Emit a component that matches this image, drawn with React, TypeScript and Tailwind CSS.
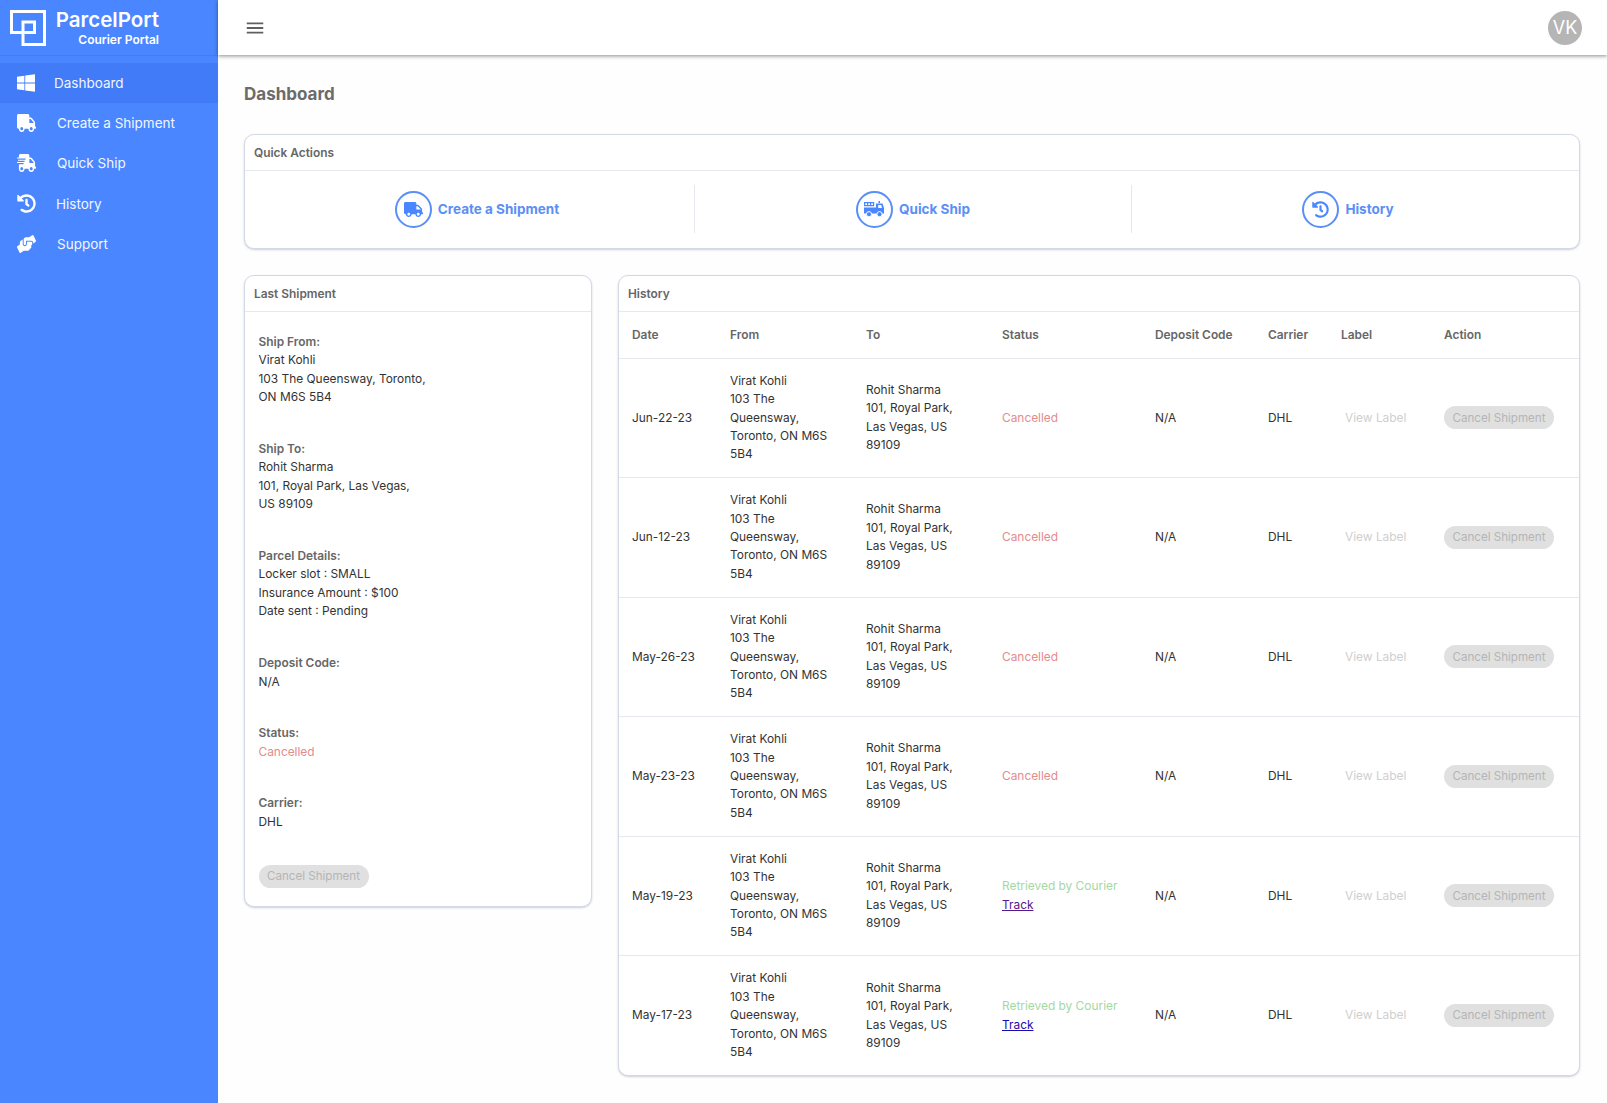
import React from "react";
import { FaWindows, FaTruck, FaShippingFast, FaHistory, FaHandsHelping } from "react-icons/fa";
import { MdOutlineMenu } from "react-icons/md";

const navItems = [
    { label: "Dashboard", icon: FaWindows, active: true, labelClass: "ml-[19px]", iconClass: "h-[20px] w-[18px]" },
    { label: "Create a Shipment", icon: FaTruck, active: false, labelClass: "ml-[21px]", iconClass: "h-[18px] w-[19px]" },
    { label: "Quick Ship", icon: FaShippingFast, active: false, labelClass: "ml-[21px]", iconClass: "h-[18px] w-[19px]" },
    { label: "History", icon: FaHistory, active: false, labelClass: "ml-[20px]", iconClass: "h-[19px] w-[19px]" },
    { label: "Support", icon: FaHandsHelping, active: false, labelClass: "ml-[21px]", iconClass: "h-[18px] w-[19px]" },
];

const shipments = [
    { date: "Jun-22-23", status: "Cancelled" },
    { date: "Jun-12-23", status: "Cancelled" },
    { date: "May-26-23", status: "Cancelled" },
    { date: "May-23-23", status: "Cancelled" },
    { date: "May-19-23", status: "Retrieved", visited: true },
    { date: "May-17-23", status: "Retrieved" },
];

const headers = ["Date", "From", "To", "Status", "Deposit Code", "Carrier", "Label", "Action"];

const Logo = (): React.JSX.Element => (
    <svg width="36" height="36" viewBox="0 0 36 36" fill="none" stroke="white" strokeWidth="3">
        <path d="M1.5 1.5H34.5V34.5H13V12H24.5V22.5H1.5Z" />
    </svg>
);

// fire-truck style glyph used on the Quick Ship action
const QuickShipIcon = (): React.JSX.Element => (
    <svg width="21" height="16" viewBox="0 0 21 16" fill="currentColor">
        <path d="M0 1H10V2.2H0ZM0 4H10V5.2H0ZM0 1H1.2V5H0ZM3 1H4.2V5H3ZM6 1H7.2V5H6ZM9 1H10.2V5H9Z" />
        <path d="M14.5 0H16V2H14.5Z" />
        <path fillRule="evenodd" d="M12 2.5H18.5L20 7V12.5H0V6.5H12ZM14.2 4V7H18L17.2 4Z" />
        <circle cx="5" cy="13.2" r="2.6" stroke="white" strokeWidth="1" />
        <circle cx="15.5" cy="13.2" r="2.6" stroke="white" strokeWidth="1" />
    </svg>
);

const TruckIcon = (): React.JSX.Element => <FaTruck className="text-[19px]" />;
const HistoryIcon = (): React.JSX.Element => <FaHistory className="text-[17px]" />;

const CancelButton = (): React.JSX.Element => (
    <button disabled className="h-[23px] w-[110px] rounded-full bg-[#e0e0e0] text-[11.6px] text-[#b5b5b5]">
        Cancel Shipment
    </button>
);

const Sidebar = (): React.JSX.Element => (
    <aside className="w-[218px] shrink-0 bg-[#4a86ff] text-[#f2f6ff]">
        <div className="flex h-[56px] items-center border-b border-[#437df2] pl-[10px]">
            <Logo />
            <div className="mb-[2px] ml-[9px] flex w-[104px] flex-col items-end font-semibold text-white">
                <span className="text-[20.5px] leading-[25px]">ParcelPort</span>
                <span className="text-[12px] leading-[15px]">Courier Portal</span>
            </div>
        </div>
        <nav className="mt-[7px]">
            {navItems.map((item) => (
                <div
                    key={item.label}
                    className={`flex h-[40.2px] items-center pl-[17px] text-[13.5px] ${item.active ? "bg-[#417bf7]" : ""}`}
                >
                    <item.icon className={`shrink-0 text-white ${item.iconClass}`} preserveAspectRatio="none" />
                    <span className={item.labelClass}>{item.label}</span>
                </div>
            ))}
        </nav>
    </aside>
);

const Card = ({ title, className, children }: { title: string; className?: string; children: React.ReactNode }): React.JSX.Element => (
    <section className={`rounded-[10px] border border-[#d4d9e6] bg-white shadow-[0_1px_2px_rgba(90,100,140,0.3)] ${className ?? ""}`}>
        <h2 className="flex h-[36px] items-center border-b border-[#e6e8ee] pl-[9px] pt-[1px] text-[11.9px] font-semibold text-[#666]">
            {title}
        </h2>
        {children}
    </section>
);

const QuickAction = ({ icon: Icon, label, className }: { icon: React.ElementType; label: string; className?: string }): React.JSX.Element => (
    <div className={`flex h-[48px] items-center justify-center gap-[6px] ${className ?? ""}`}>
        <span className="flex h-[37px] w-[37px] items-center justify-center rounded-full border-2 border-[#5a8ff5] text-[#4a86ff]">
            <Icon />
        </span>
        <span className="text-[13.5px] font-bold text-[#5a8ff5]">{label}</span>
    </div>
);

const Field = ({ label, children, className }: { label: string; children: React.ReactNode; className?: string }): React.JSX.Element => (
    <div className={className}>
        <p className="font-semibold text-[#666]">{label}</p>
        {children}
    </div>
);

const LastShipment = (): React.JSX.Element => (
    <Card title="Last Shipment" className="h-[632px] w-[348px] shrink-0">
        <div className="px-[13.5px] pt-[21px] text-[11.9px] leading-[18.45px] text-[#333]">
            <Field label="Ship From:" className="mb-[33px]">
                <p>Virat Kohli</p>
                <p>103 The Queensway, Toronto,</p>
                <p>ON M6S 5B4</p>
            </Field>
            <Field label="Ship To:" className="mb-[33px]">
                <p>Rohit Sharma</p>
                <p>101, Royal Park, Las Vegas,</p>
                <p>US 89109</p>
            </Field>
            <Field label="Parcel Details:" className="mb-[34px]">
                <p>Locker slot : SMALL</p>
                <p>Insurance Amount : $100</p>
                <p>Date sent : Pending</p>
            </Field>
            <Field label="Deposit Code:" className="mb-[33px]">
                <p>N/A</p>
            </Field>
            <Field label="Status:" className="mb-[33px]">
                <p className="text-[#e38c8c]">Cancelled</p>
            </Field>
            <Field label="Carrier:" className="mb-[34px]">
                <p>DHL</p>
            </Field>
            <CancelButton />
        </div>
    </Card>
);

const HistoryTable = (): React.JSX.Element => (
    <Card title="History" className="min-w-0 flex-1">
        <table className="w-full table-fixed border-collapse text-left text-[11.9px] leading-[18.4px] text-[#333]">
            <colgroup>
                <col className="w-[111px]" />
                <col className="w-[136px]" />
                <col className="w-[136px]" />
                <col className="w-[153px]" />
                <col className="w-[113px]" />
                <col className="w-[73px]" />
                <col className="w-[103px]" />
                <col />
            </colgroup>
            <thead>
                <tr className="h-[46px]">
                    {headers.map((header, index) => (
                        <th key={header} className={`font-semibold text-[#666] ${index === 0 ? "pl-[13px]" : ""}`}>
                            {header}
                        </th>
                    ))}
                </tr>
            </thead>
            <tbody>
                {shipments.map((row) => (
                    <tr key={row.date} className="h-[119.5px] border-t border-[#e6e8ee]">
                        <td className="pl-[13px]">{row.date}</td>
                        <td className="pr-[30px]">
                            <p>Virat Kohli</p>
                            <p>103 The Queensway, Toronto, ON M6S 5B4</p>
                        </td>
                        <td className="pr-[30px]">
                            <p>Rohit Sharma</p>
                            <p>101, Royal Park, Las Vegas, US 89109</p>
                        </td>
                        <td>
                            {row.status === "Cancelled" ? (
                                <span className="text-[#e38c8c]">Cancelled</span>
                            ) : (
                                <>
                                    <p className="text-[#a5d8a5]">Retrieved by Courier</p>
                                    <a href="#" className={`underline ${row.visited ? "text-[#551a8b]" : "text-[#1a0dab]"}`}>
                                        Track
                                    </a>
                                </>
                            )}
                        </td>
                        <td>N/A</td>
                        <td>DHL</td>
                        <td className="pl-[4px] text-[#cfcfcf]">View Label</td>
                        <td>
                            <CancelButton />
                        </td>
                    </tr>
                ))}
            </tbody>
        </table>
    </Card>
);

const App = (): React.JSX.Element => {
    return (
        <div className="flex h-[1103px] overflow-hidden bg-[#fefefe] font-['Inter',sans-serif]">
            <Sidebar />
            <div className="min-w-0 flex-1">
                <header className="flex h-[55px] items-center justify-between bg-white pl-[26px] pr-[25px] shadow-[0_1px_4px_rgba(0,0,0,0.45)]">
                    <MdOutlineMenu className="text-[22px] text-[#5f5f5f]" />
                    <div className="flex h-[34px] w-[34px] items-center justify-center rounded-full bg-[#b5b5b5] text-[18px] text-white">
                        VK
                    </div>
                </header>
                <main className="pl-[26px] pr-[27px]">
                    <h1 className="flex h-[79px] items-center text-[17px] font-bold text-[#6b6b6b]">Dashboard</h1>
                    <Card title="Quick Actions" className="h-[115px]">
                        <div className="grid grid-cols-[450px_437px_1fr] pt-[14px]">
                            <QuickAction icon={TruckIcon} label="Create a Shipment" className="border-r border-[#e6e8ee] pl-[15px]" />
                            <QuickAction icon={QuickShipIcon} label="Quick Ship" className="border-r border-[#e6e8ee]" />
                            <QuickAction icon={HistoryIcon} label="History" className="pr-[15px]" />
                        </div>
                    </Card>
                    <div className="mt-[26px] flex items-start gap-[26px]">
                        <LastShipment />
                        <HistoryTable />
                    </div>
                </main>
            </div>
        </div>
    );
};

export default App;
